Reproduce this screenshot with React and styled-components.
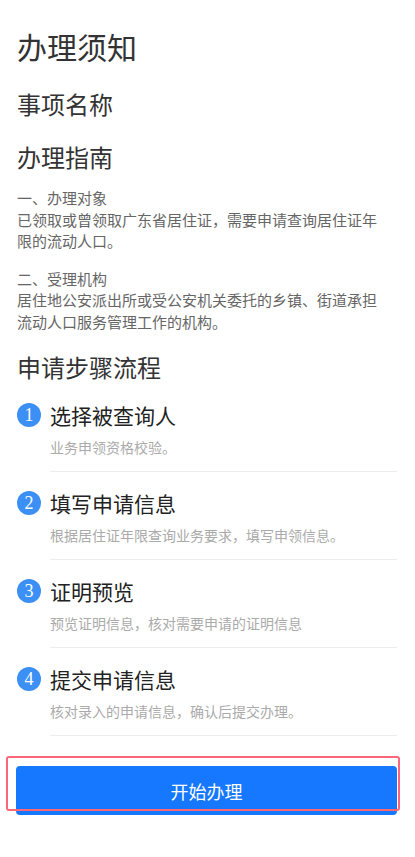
import React from "react";
import styled, { createGlobalStyle } from "styled-components";

const steps = [
  { title: "选择被查询人", desc: "业务申领资格校验。" },
  { title: "填写申请信息", desc: "根据居住证年限查询业务要求，填写申领信息。" },
  { title: "证明预览", desc: "预览证明信息，核对需要申请的证明信息" },
  { title: "提交申请信息", desc: "核对录入的申请信息，确认后提交办理。" },
];

export default function App() {
  return (
    <Page>
      <GlobalStyle />
      <Title>办理须知</Title>
      <Heading>事项名称</Heading>
      <Heading $top={21}>办理指南</Heading>

      <Para $top={14}>
        一、办理对象
        <br />
        已领取或曾领取广东省居住证，需要申请查询居住证年限的流动人口。
      </Para>
      <Para $top={16}>
        二、受理机构
        <br />
        居住地公安派出所或受公安机关委托的乡镇、街道承担流动人口服务管理工作的机构。
      </Para>

      <Heading $top={19}>申请步骤流程</Heading>

      <StepList>
        {steps.map((s, i) => (
          <Step key={s.title}>
            <Badge>{i + 1}</Badge>
            <StepBody>
              <StepTitle>{s.title}</StepTitle>
              <StepDesc>{s.desc}</StepDesc>
            </StepBody>
          </Step>
        ))}
      </StepList>

      <ButtonWrap>
        <StartButton>开始办理</StartButton>
        <FocusRing />
      </ButtonWrap>
    </Page>
  );
}

const GlobalStyle = createGlobalStyle`
  body {
    margin: 0;
    background: #fff;
    font-family: "Noto Sans CJK SC", "Noto Sans", sans-serif;
  }
`;

const Page = styled.div`
  width: 415px;
  box-sizing: border-box;
  padding: 26px 18px 40px 17px;
  color: #333;
`;

const Title = styled.h1`
  margin: 0;
  font-size: 30px;
  line-height: 40px;
  font-weight: 400;
  color: #333;
`;

const Heading = styled.h2`
  margin: ${(p) => p.$top ?? 22}px 0 0;
  font-size: 24px;
  line-height: 32px;
  font-weight: 400;
  color: #333;
`;

const Para = styled.p`
  margin: ${(p) => p.$top}px 0 0;
  max-width: 368px;
  font-size: 15px;
  line-height: 21.5px;
  color: #666;
`;

const StepList = styled.div`
  margin-top: 18px;
  display: flex;
  flex-direction: column;
  gap: 17px;
`;

const Step = styled.div`
  display: flex;
  align-items: flex-start;
  gap: 9px;
`;

const Badge = styled.span`
  flex: none;
  width: 24px;
  height: 24px;
  margin-top: 2px;
  border-radius: 50%;
  background: #3b8ff5;
  color: #fff;
  font-family: "Liberation Serif", serif;
  font-size: 18px;
  line-height: 24px;
  text-align: center;
`;

const StepBody = styled.div`
  flex: 1;
  padding-bottom: 14px;
  border-bottom: 1px solid #ededed;
`;

const StepTitle = styled.div`
  font-size: 21px;
  line-height: 28px;
  color: #222;
`;

const StepDesc = styled.div`
  margin-top: 8px;
  font-size: 14px;
  line-height: 20px;
  color: #aaa;
`;

const ButtonWrap = styled.div`
  position: relative;
  margin-top: 30px;
  margin-left: -1px;
`;

const StartButton = styled.button`
  display: block;
  width: 381px;
  height: 49px;
  border: none;
  border-radius: 4px;
  background: #1677ff;
  color: #fff;
  font-family: "Noto Sans CJK SC", sans-serif;
  font-size: 18px;
`;

const FocusRing = styled.div`
  position: absolute;
  left: -10px;
  top: -10px;
  width: 394px;
  height: 55px;
  box-sizing: border-box;
  border: 2px solid #ff6677;
  border-radius: 3px;
  pointer-events: none;
`;
